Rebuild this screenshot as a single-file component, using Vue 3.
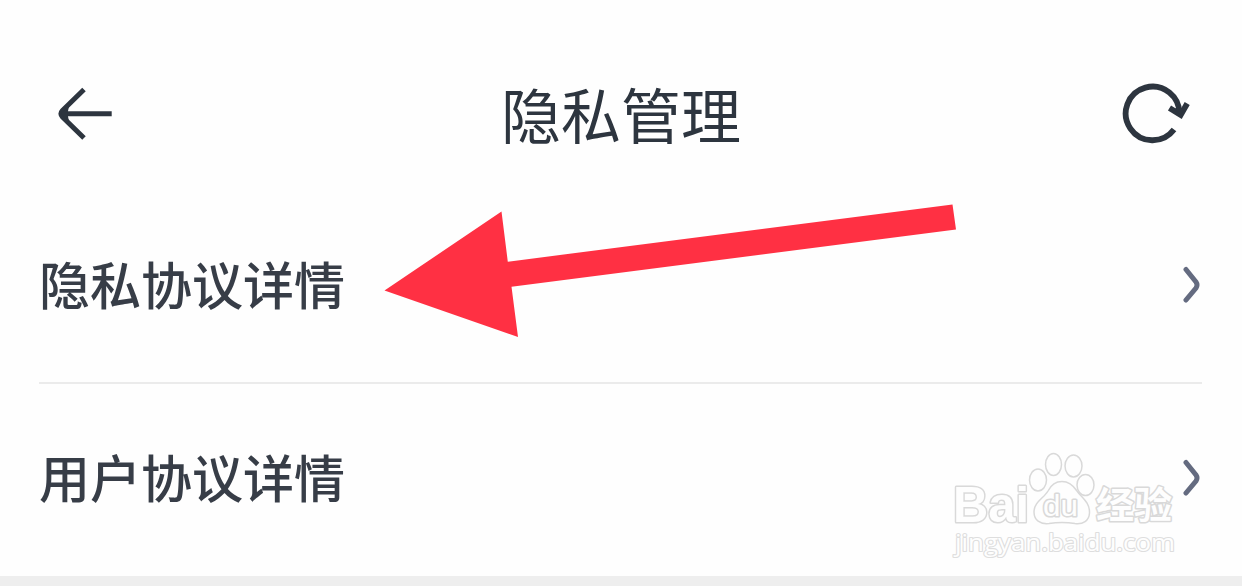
<template>
  <div class="page">
    <header class="header">
      <svg class="back" viewBox="0 0 56 54" @click="goBack">
        <path d="M27 2.500 L5.500 23.500 Q2.500 26.700 5.500 30 L27 51" />
        <path d="M6 26.800 H54.700" />
        <path class="tip" d="M4 26.800 L12 19 L10.500 26.800 L12 34.500 Z" />
      </svg>
      <h1 class="title">隐私管理</h1>
      <svg class="refresh" viewBox="0 0 70 64">
        <path d="M54 47.500 A26.800 26.800 0 1 1 59.300 33" />
        <path d="M49.500 26 L60.700 33 L67.200 21.500" />
        <path class="tip" d="M54 27 L61 33 L64 27 L59 25 Z" />
      </svg>
    </header>

    <ul class="list">
      <li v-for="item in items" :key="item" class="row">
        <span class="label">{{ item }}</span>
        <svg class="chevron" viewBox="0 0 18 38">
          <path d="M3 3.500 L13 16 Q15 19 13 22 L3 34" />
        </svg>
      </li>
    </ul>

    <div class="footer"></div>

    <svg class="pointer" viewBox="0 0 574 134">
      <polygon points="1.500,87.500 118.500,8.500 124.800,58.700 569.500,1.500 573,26.500 128.500,83.700 135,134" />
    </svg>

    <svg class="watermark" viewBox="0 0 230 116">
      <g class="brand">
        <text x="3" y="71.500" textLength="76" lengthAdjust="spacingAndGlyphs">Bai</text>
        <ellipse cx="88" cy="30" rx="8.500" ry="11" />
        <ellipse cx="103.500" cy="14.500" rx="8" ry="11" />
        <ellipse cx="123.500" cy="16" rx="8.500" ry="11" />
        <ellipse cx="135.500" cy="35" rx="8.500" ry="10.500" />
        <path d="M112 31.500 C119 31.500 123 35 127 41 C131 47 140 52 139.500 63 C139 71 133 74.500 125 73.500 C116 72 108 72 99 73.500 C90 74.500 84 70 84 62 C84 52 94 48 98 41 C101 35 105 31.500 112 31.500 Z" />
        <text class="du" x="93" y="66" textLength="35" lengthAdjust="spacingAndGlyphs">du</text>
        <text class="cn" x="146" y="68.500" textLength="76" lengthAdjust="spacingAndGlyphs">经验</text>
      </g>
      <text class="site" x="5" y="101" textLength="220" lengthAdjust="spacingAndGlyphs">jingyan.baidu.com</text>
    </svg>
  </div>
</template>

<script setup>
import { ref } from "vue";

const items = ref(["隐私协议详情", "用户协议详情"]);

function goBack() {
  window.history.back();
}
</script>

<style>
body {
  background: #fefefe;
}
</style>

<style scoped>
.page {
  position: relative;
  box-sizing: border-box;
  height: 586px;
  display: flex;
  flex-direction: column;
  overflow: hidden;
  background: #fefefe;
  font-family: "Noto Sans CJK SC", sans-serif;
}
.header {
  box-sizing: border-box;
  height: 188px;
  padding: 40px 52px 0 57px;
  display: grid;
  grid-template-columns: 70px 1fr 70px;
  align-items: center;
}
.header svg,
.chevron {
  fill: none;
  stroke: #2d353f;
  stroke-width: 5;
}
.header .back {
  width: 56px;
  height: 54px;
}
.header .tip {
  fill: #2d353f;
  stroke: none;
}
.refresh {
  width: 70px;
  height: 64px;
}
.header .refresh {
  stroke-width: 5.8;
}
.title {
  margin: 0;
  padding: 0 5px 2px 0;
  color: #2d353f;
  font-size: 60px;
  font-weight: 400;
  line-height: 80px;
  text-align: center;
}
.list {
  margin: 0;
  padding: 0 40px 0 39px;
  list-style: none;
}
.row {
  box-sizing: border-box;
  height: 194px;
  padding-right: 1px;
  display: flex;
  align-items: center;
  justify-content: space-between;
}
.row + .row {
  padding-bottom: 4px;
  border-top: 2px solid #ebebeb;
}
.label {
  padding-bottom: 4px;
  color: #373d47;
  font-size: 51px;
  font-weight: 500;
  line-height: 70px;
}
.chevron {
  width: 18px;
  height: 38px;
  stroke: #646b80;
  stroke-linecap: round;
}
.footer {
  flex: 1;
  background: #eeeeee;
}
.pointer {
  position: absolute;
  left: 383px;
  top: 203px;
  width: 574px;
  height: 134px;
  fill: #ff3043;
}
.watermark {
  position: absolute;
  left: 950px;
  top: 450px;
  width: 230px;
  height: 116px;
  fill: #fefefe;
  stroke: #d9d9d9;
  stroke-width: 1.5;
}
.watermark text {
  paint-order: stroke;
  stroke-width: 3;
  stroke-linejoin: round;
}
.brand {
  font-family: "Liberation Sans", sans-serif;
  font-size: 50px;
  font-weight: 700;
}
.brand .du {
  font-size: 29px;
  font-weight: 400;
}
.brand .cn {
  font-family: "Noto Sans CJK SC", sans-serif;
  font-size: 37px;
}
.watermark .site {
  font-family: "Open Sans", sans-serif;
  font-size: 24px;
  stroke-width: 2.2;
  stroke: #dedede;
}
</style>
